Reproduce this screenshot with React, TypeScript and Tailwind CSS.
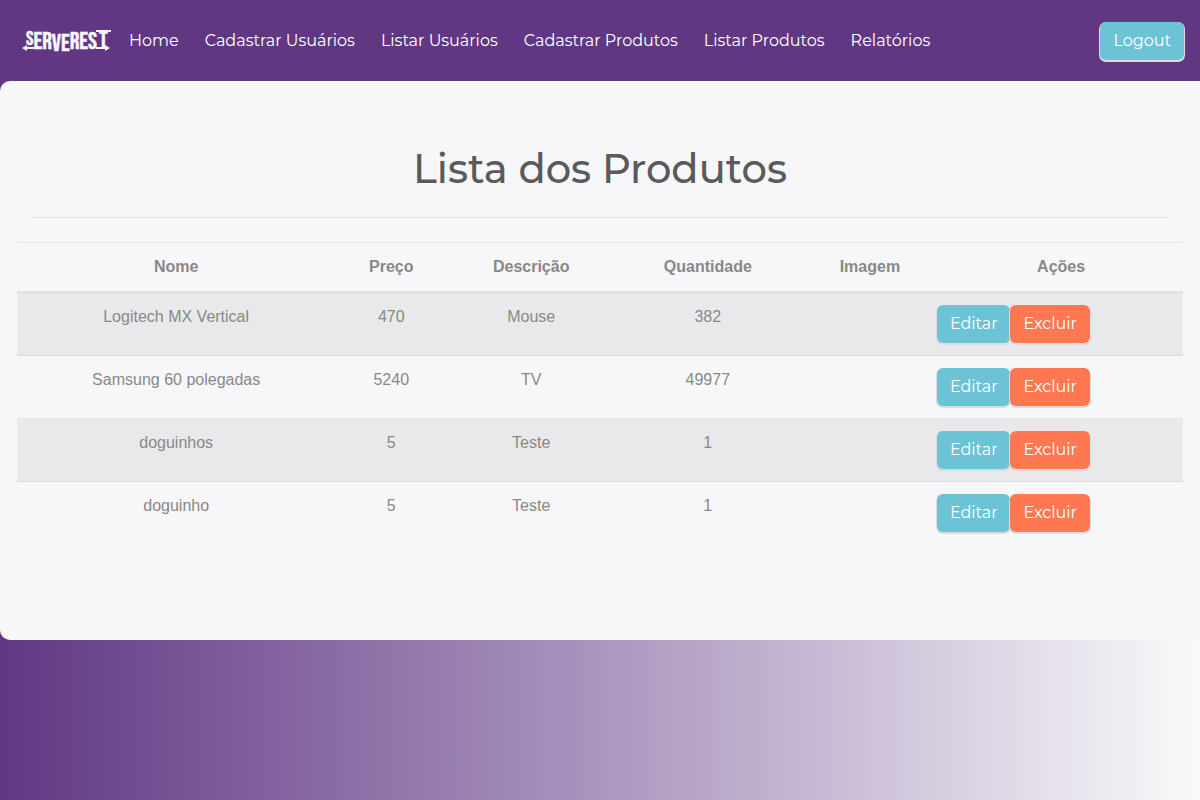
const links = [
  'Home',
  'Cadastrar Usuários',
  'Listar Usuários',
  'Cadastrar Produtos',
  'Listar Produtos',
  'Relatórios',
];

const products = [
  { name: 'Logitech MX Vertical', price: 470, description: 'Mouse', quantity: 382 },
  { name: 'Samsung 60 polegadas', price: 5240, description: 'TV', quantity: 49977 },
  { name: 'doguinhos', price: 5, description: 'Teste', quantity: 1 },
  { name: 'doguinho', price: 5, description: 'Teste', quantity: 1 },
];

const columns = [
  { label: 'Nome', width: 'w-[27.3%]' },
  { label: 'Preço', width: 'w-[9.6%]' },
  { label: 'Descrição', width: 'w-[14.4%]' },
  { label: 'Quantidade', width: 'w-[15.9%]' },
  { label: 'Imagem', width: 'w-[11.9%]' },
  { label: 'Ações', width: 'w-[20.9%]' },
];

function Logo() {
  return (
    <svg
      width="96"
      height="32"
      viewBox="0 0 96 32"
      role="img"
      aria-label="ServeRest"
      className="overflow-visible"
    >
      <text
        x="8"
        y="20"
        fontSize="24"
        fill="#f7f7f9"
        stroke="#f7f7f9"
        strokeWidth="0.5"
        fontFamily="'Bebas Neue', 'Oswald', 'DejaVu Sans Condensed', sans-serif"
      >
        <tspan fontSize="20">S</tspan>
        <tspan dy="4">ER</tspan>
        <tspan dy="2">VE</tspan>
        <tspan dy="-2">RES</tspan>
        <tspan x="81" dy="-1">T</tspan>
      </text>
      <path d="M8 23H16M78 23H88M78 6H93" fill="none" stroke="#f7f7f9" strokeWidth="2" />
      <path d="M4 23L9 20V26ZM92 23L87 20V26Z" fill="#f7f7f9" />
    </svg>
  );
}

export default function App() {
  return (
    <div className="min-h-screen bg-linear-to-r from-[#613783] to-[#fafafa] font-['Montserrat','Inter',sans-serif] text-base text-[#888]">
      <nav className="flex h-[81px] items-center bg-[#613783] pr-4 pl-[18px]">
        <a href="#home" className="mr-[15px] shrink-0">
          <Logo />
        </a>
        <ul className="flex flex-1 items-center gap-[26px] text-white">
          {links.map((link) => (
            <li key={link}>
              <a href="#" className="whitespace-nowrap">{link}</a>
            </li>
          ))}
        </ul>
        <button
          type="button"
          className="h-[38px] rounded-md bg-[#6cc3d5] px-[13px] leading-6 text-white shadow-[0_1px_0_1px_#ddd]"
        >
          Logout
        </button>
      </nav>

      <main className="rounded-[10px] bg-[#f7f7f9] px-[17px] pt-16 pb-24">
        <h1 className="text-center text-[40px] leading-12 font-medium text-[#5a5a5a]">Lista dos Produtos</h1>
        <hr className="mx-[15px] mt-6 mb-6 border-[#dedee0]" />
        <table className="w-full table-fixed border-separate border-spacing-0 text-center font-['Liberation_Sans',sans-serif]">
          <thead>
            <tr>
              {columns.map((column) => (
                <th
                  key={column.label}
                  scope="col"
                  className={`border-y border-[#e7e7e9] p-3 font-bold ${column.width}`}
                >
                  {column.label}
                </th>
              ))}
            </tr>
          </thead>
          <tbody>
            {products.map((product) => (
              <tr
                key={product.name}
                className="odd:bg-[#e9e9eb] [&>td]:border-t [&>td]:border-[#dbdbdd] [&>td]:p-3 [&>td]:align-top [&:nth-child(odd):not(:first-child)>td]:border-[#e7e7e9]"
              >
                <td>{product.name}</td>
                <td>{product.price}</td>
                <td>{product.description}</td>
                <td>{product.quantity}</td>
                <td></td>
                <td>
                  <div className="-ml-[14px] flex font-['Montserrat','Inter',sans-serif] text-white">
                    <button
                      type="button"
                      className="h-[38px] w-[73px] rounded-md bg-[#6cc3d5] leading-6 shadow-[0_1px_0_1px_#dcdcde]"
                    >
                      Editar
                    </button>
                    <button
                      type="button"
                      className="h-[38px] w-20 rounded-md bg-[#ff7851] leading-6 shadow-[0_1px_0_1px_#dcdcde]"
                    >
                      Excluir
                    </button>
                  </div>
                </td>
              </tr>
            ))}
          </tbody>
        </table>
      </main>
    </div>
  );
}
